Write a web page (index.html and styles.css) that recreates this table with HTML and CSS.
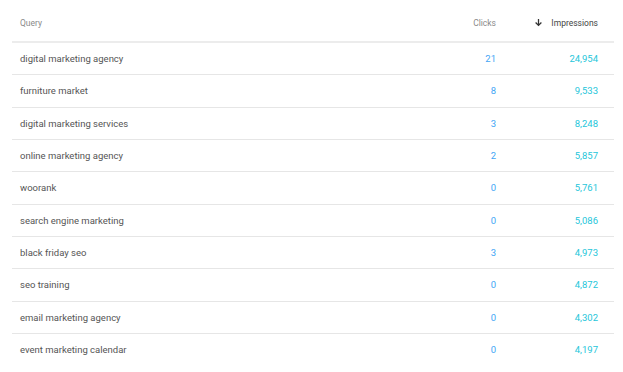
FILE: index.html
```html
<!DOCTYPE html>
<html lang="en">
<head>
  <meta charset="UTF-8" />
  <title>Queries</title>
  <link rel="stylesheet" href="styles.css">
</head>
<body>
  <table class="queries">
    <thead>
      <tr>
        <th class="col-query">Query</th>
        <th class="col-clicks">Clicks</th>
        <th class="col-impr">
          <svg class="sort-icon" viewBox="0 0 10 10" width="9" height="9">
            <path d="M5 1v7M1.8 5l3.2 3.2L8.2 5" fill="none" stroke="#333" stroke-width="1.4"/>
          </svg>
          Impressions
        </th>
      </tr>
    </thead>
    <tbody>
      <tr><td>digital marketing agency</td><td class="clicks">21</td><td class="impr">24,954</td></tr>
      <tr><td>furniture market</td><td class="clicks">8</td><td class="impr">9,533</td></tr>
      <tr><td>digital marketing services</td><td class="clicks">3</td><td class="impr">8,248</td></tr>
      <tr><td>online marketing agency</td><td class="clicks">2</td><td class="impr">5,857</td></tr>
      <tr><td>woorank</td><td class="clicks">0</td><td class="impr">5,761</td></tr>
      <tr><td>search engine marketing</td><td class="clicks">0</td><td class="impr">5,086</td></tr>
      <tr><td>black friday seo</td><td class="clicks">3</td><td class="impr">4,973</td></tr>
      <tr><td>seo training</td><td class="clicks">0</td><td class="impr">4,872</td></tr>
      <tr><td>email marketing agency</td><td class="clicks">0</td><td class="impr">4,302</td></tr>
      <tr><td>event marketing calendar</td><td class="clicks">0</td><td class="impr">4,197</td></tr>
    </tbody>
  </table>
</body>
</html>
```

FILE: styles.css
```css
body {
  margin: 0;
  padding: 0 9px 0 12px;
  background: #fff;
  font-family: Roboto, "Liberation Sans", sans-serif;
}

.queries {
  width: 100%;
  border-collapse: collapse;
}

/* Header */
.queries th {
  height: 36px;
  padding: 5px 0 0;
  font-size: 8.5px;
  font-weight: 400;
  color: #8a8a8a;
  border-bottom: 2px solid #ececec;
}

.col-query {
  text-align: left;
  padding-left: 8px !important;
}

.col-clicks {
  text-align: right;
  width: 80px;
}

.queries th.col-impr {
  text-align: right;
  width: 102px;
  padding-right: 16px;
  color: #444;
}

.sort-icon {
  vertical-align: -1px;
  margin-right: 6px;
}

/* Rows */
.queries td {
  height: 31.33px;
  font-size: 9.5px;
  color: #555;
  border-bottom: 1px solid #e6e6e6;
  padding: 0;
}

.queries td:first-child {
  padding-left: 8px;
}

.queries tr:last-child td {
  border-bottom: none;
}

.clicks {
  text-align: right;
  color: #42a5f5 !important;
}

.impr {
  text-align: right;
  padding-right: 16px !important;
  color: #26c6da !important;
}
```
